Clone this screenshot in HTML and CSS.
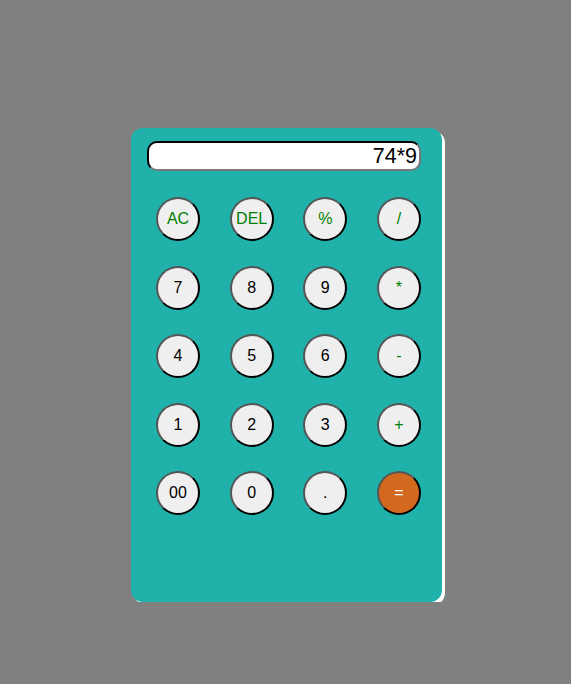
FILE: index.html
```html
<!DOCTYPE html>
<html>
<head>
<meta charset="utf-8">
<link rel="stylesheet" href="styles.css">
</head>
<body>
<div class="calc">
  <div class="display">74*9</div>
  <div class="keys">
    <button class="key op">AC</button>
    <button class="key op">DEL</button>
    <button class="key op">%</button>
    <button class="key op">/</button>
    <button class="key">7</button>
    <button class="key">8</button>
    <button class="key">9</button>
    <button class="key op">*</button>
    <button class="key">4</button>
    <button class="key">5</button>
    <button class="key">6</button>
    <button class="key op">-</button>
    <button class="key">1</button>
    <button class="key">2</button>
    <button class="key">3</button>
    <button class="key op">+</button>
    <button class="key">00</button>
    <button class="key">0</button>
    <button class="key">.</button>
    <button class="key eq">=</button>
  </div>
</div>
</body>
</html>
```
FILE: styles.css
```css
html, body {
  margin: 0;
  padding: 0;
  background: #808080;
  font-family: "Liberation Sans", Arial, sans-serif;
}
body {
  padding-top: 128px;
  padding-left: 131px;
}
.calc {
  width: 311px;
  height: 474px;
  background: #20b2aa;
  border-radius: 12px;
  box-shadow: 3px 3px 0 0 #ffffff;
  box-sizing: border-box;
  padding: 13px 0 0 16px;
}
.display {
  width: 274px;
  height: 30px;
  box-sizing: border-box;
  background: #ffffff;
  border: 2px solid;
  border-color: #000 #777 #777 #000;
  border-radius: 10px;
  text-align: right;
  font-size: 21.5px;
  line-height: 26px;
  padding-right: 2px;
  color: #000;
}
.keys {
  width: 265px;
  margin: 26px 0 0 9px;
  display: grid;
  grid-template-columns: repeat(4, 44px);
  justify-content: space-between;
  row-gap: 24.5px;
}
.key {
  width: 44px;
  height: 44px;
  box-sizing: border-box;
  border-radius: 50%;
  border: 2px solid;
  border-color: #555 #000 #000 #555;
  background: #efefef;
  color: #000;
  font-family: "Liberation Sans", Arial, sans-serif;
  font-size: 16px;
  padding: 0;
  margin: 0;
}
.op {
  color: #008000;
}
.eq {
  background: #d2691e;
  color: #ffffff;
}
```
